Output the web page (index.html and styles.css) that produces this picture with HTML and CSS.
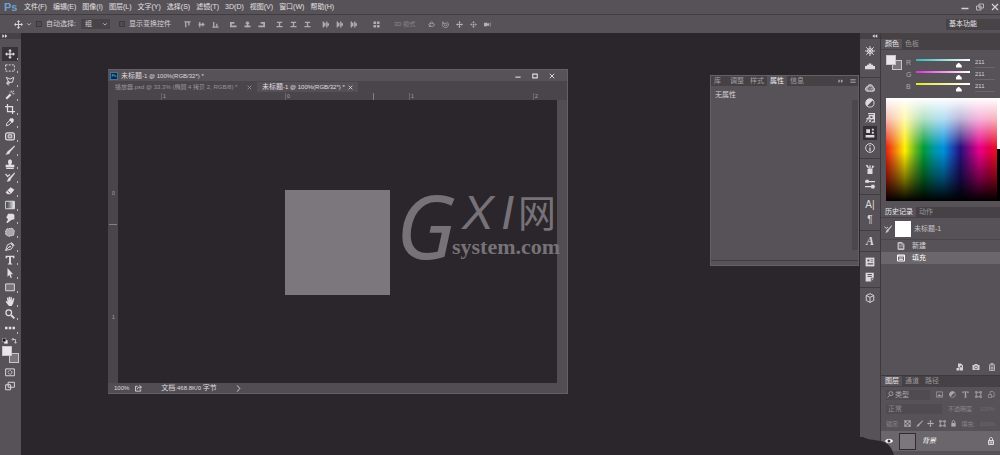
FILE: index.html
```html
<!DOCTYPE html>
<html lang="zh-CN">
<head>
<meta charset="utf-8">
<title>Ps</title>
<link rel="stylesheet" href="styles.css">
</head>
<body>
<svg class="sprite" aria-hidden="true">
  <symbol id="move" viewBox="0 0 16 16"><path d="M8 0l3 3.500H9V7h3.500V5L16 8l-3.500 3V9H9v3.500h2L8 16l-3-3.500h2V9H3.500v2L0 8l3.500-3v2H7V3.500H5z" fill="currentColor"/></symbol>
  <symbol id="marquee" viewBox="0 0 16 16"><path d="M1 3h14v10H1z" class="ln" stroke-dasharray="3 2"/></symbol>
  <symbol id="lasso" viewBox="0 0 16 16"><path d="M6 10L2 2l6 3 6-3-2 8-6 0-3 2 3 3" class="ln"/><circle cx="5" cy="11" r="2" class="ln"/></symbol>
  <symbol id="wand" viewBox="0 0 16 16"><path d="M2 14l7-7" class="ln" stroke-width="3.500"/><path d="M10 1v3M15 6h-3M14 1l-2 3M7 3l1 1" class="ln"/></symbol>
  <symbol id="crop" viewBox="0 0 16 16"><path d="M4 0v12h12M0 4h12v12" class="ln" stroke-width="2"/></symbol>
  <symbol id="dropper" viewBox="0 0 16 16"><path d="M2 14l1-4 5-5 3 3-5 5z" class="ln"/><path d="M8 3l5 5M10 6l3-3" class="ln" stroke-width="4"/></symbol>
  <symbol id="patch" viewBox="0 0 16 16"><rect x="1" y="3" width="14" height="11" rx="3" class="ln" stroke-width="2"/><path d="M5 6h6v5H5z" fill="#8b878b" stroke="currentColor"/></symbol>
  <symbol id="brush" viewBox="0 0 16 16"><path d="M15 1l1 1-8 9-2-2zM6 9l2 2c0 3-3 4-7 4 2-1 2-5 5-6z" fill="currentColor" stroke="currentColor" stroke-width="0.500"/></symbol>
  <symbol id="stamp" viewBox="0 0 16 16"><path d="M6 9c0-2-2-3-1-6 1-3 5-3 6 0 1 3-1 4-1 6h5v4H1V9zM2 14h12v2H2z" fill="currentColor"/></symbol>
  <symbol id="hist" viewBox="0 0 16 16"><path d="M15 1l1 1-7 9-2-2zM7 9l2 2c0 3-2 4-6 4 2-1 1-5 4-6z" fill="currentColor" stroke="currentColor" stroke-width="0.500"/><path d="M1 3l3 4 4-3" class="ln" stroke-width="2"/></symbol>
  <symbol id="eraser" viewBox="0 0 16 16"><path d="M9 2l6 4-6 7H4l-3-3z" fill="currentColor"/><path d="M4 8l5 4M3 15h11" class="ln" stroke="#777"/></symbol>
  <symbol id="grad" viewBox="0 0 16 16"><linearGradient id="gg"><stop stop-color="#333"/><stop offset="1" stop-color="#eee"/></linearGradient><path d="M1 2h14v12H1z" fill="url(#gg)" stroke="currentColor"/></symbol>
  <symbol id="smudge" viewBox="0 0 16 16"><path d="M5 1h8l2 2v7l-5 1-6 5-2-1 3-5-3-3z" fill="currentColor"/></symbol>
  <symbol id="sponge" viewBox="0 0 16 16"><path d="M3 3l9-1 3 4-1 7-8 2-5-3V6z" fill="#aaa6aa" stroke="currentColor" stroke-dasharray="2 1"/></symbol>
  <symbol id="pen" viewBox="0 0 16 16"><path d="M1 15l3-9 5-2 4 4-3 5zM1 15l6-6M9 3l5 5M10 2l5 5" class="ln"/><circle cx="8" cy="9" r="1.500" fill="currentColor"/></symbol>
  <symbol id="type" viewBox="0 0 16 16"><path d="M1 1h14v4h-2l-1-2H9.500v10l2 1v1h-7v-1l2-1V3H4L3 5H1z" fill="currentColor"/></symbol>
  <symbol id="arrow" viewBox="0 0 16 16"><path d="M4 0l9 10H9l2 5-2 1-2-5-3 3z" fill="currentColor"/></symbol>
  <symbol id="rect" viewBox="0 0 16 16"><path d="M1 3h14v11H1z" fill="#777377" stroke="currentColor"/></symbol>
  <symbol id="hand" viewBox="0 0 16 16"><path d="M4 9L3 3l2-1 1 5V1h2v6l1-6 2 1v6l2-5 2 1-2 8-3 5H7L1 9l1-1z" fill="currentColor"/></symbol>
  <symbol id="zoom" viewBox="0 0 16 16"><circle cx="6" cy="6" r="4.500" class="ln" stroke-width="2"/><path d="M10 10l5 5" class="ln" stroke-width="3"/></symbol>
  <symbol id="find" viewBox="0 0 16 16"><circle cx="9" cy="6" r="4.500" class="ln" stroke-width="2"/><path d="M6 10l-5 5" class="ln" stroke-width="2"/></symbol>
  <symbol id="more" viewBox="0 0 16 16"><path d="M0 6h4v4H0zM6 6h4v4H6zM12 6h4v4h-4z" fill="currentColor"/></symbol>
  <symbol id="reset" viewBox="0 0 16 16"><path d="M6 6h9v9H6z" fill="#eee"/><path d="M1 1h9v9H1z" fill="#111" stroke="#ccc"/></symbol>
  <symbol id="swap" viewBox="0 0 16 16"><path d="M5 1v6M2 4l3-3 3 3M5 4h7v10M9 11l3 3 3-3" class="ln" stroke-width="2"/></symbol>
  <symbol id="mask" viewBox="0 0 16 16"><path d="M1 3h14v11H1z" class="ln"/><circle cx="8" cy="8.500" r="3" class="ln" stroke-dasharray="2 1"/></symbol>
  <symbol id="screen" viewBox="0 0 16 16"><path d="M5 2h10v8H5zM1 6h8v8H1z" class="ln"/></symbol>
  <symbol id="at" viewBox="0 0 16 16"><path d="M1 2h14M4 3v11M11 3v7" class="ln" stroke-width="3"/></symbol>
  <symbol id="am" viewBox="0 0 16 16"><path d="M1 8h14M4 2v12M11 4v8" class="ln" stroke-width="3"/></symbol>
  <symbol id="ab" viewBox="0 0 16 16"><path d="M1 14h14M4 2v11M11 6v7" class="ln" stroke-width="3"/></symbol>
  <symbol id="al" viewBox="0 0 16 16"><path d="M2 2v12M3 4h7M3 12h12" class="ln" stroke-width="4"/></symbol>
  <symbol id="ac" viewBox="0 0 16 16"><path d="M8 1v14M4 5h8M1 12h14" class="ln" stroke-width="4"/></symbol>
  <symbol id="ar" viewBox="0 0 16 16"><path d="M14 2v12M6 4h7M1 12h12" class="ln" stroke-width="4"/></symbol>
  <symbol id="dv" viewBox="0 0 16 16"><path d="M2 3h12M1 13h14M8 3v10" class="ln" stroke-width="3"/></symbol>
  <symbol id="dh" viewBox="0 0 16 16"><path d="M3 1v14M11 1v14" class="ln" stroke-width="3"/><path d="M4 4h4v8H4zM12 5h4v6h-4z" fill="currentColor"/></symbol>
  <symbol id="auto" viewBox="0 0 16 16"><path d="M1 1h6v6H1zM9 1h6v6H9zM1 9h6v6H1zM9 9h6v6H9z" fill="currentColor"/></symbol>
  <symbol id="orbit" viewBox="0 0 16 16"><path d="M1 9c0-4 14-4 14 0s-10 5-12 2M5 7c0-7 6-7 7 0M3 14v-4h4" class="ln"/></symbol>
  <symbol id="roll" viewBox="0 0 16 16"><circle cx="8" cy="8" r="3" class="ln"/><path d="M3 3a7 7 0 1 0 8-1M2 1v4h4" class="ln"/></symbol>
  <symbol id="slide" viewBox="0 0 16 16"><path d="M8 0l3 4H5zM8 16l3-4H5zM0 8l4-3v6zM16 8l-4-3v6zM6 6h4v4H6z" fill="currentColor"/></symbol>
  <symbol id="cam" viewBox="0 0 16 16"><path d="M0 4h8v8H0zM8 7l4-3v8L8 9zM14 3h1v10h-1z" fill="currentColor"/></symbol>
  <symbol id="wheel" viewBox="0 0 16 16"><circle cx="8" cy="8" r="4" class="ln"/><path d="M8 0v16M0 8h16M2 2l12 12M14 2L2 14" class="ln"/></symbol>
  <symbol id="swatchfan" viewBox="0 0 16 16"><path d="M0 13V8h3V6h3V4h4v2h3v2h3v5z" fill="currentColor"/></symbol>
  <symbol id="cc" viewBox="0 0 16 16"><path d="M4 13C-1 13 0 6 4 6c1-5 9-4 9 1 4 1 3 6 0 6z" fill="#aaa6aa" stroke="currentColor"/><path d="M8 11a2 2 0 1 1 1-3M12 10a2 2 0 1 1 0-2" class="ln" stroke="#555"/></symbol>
  <symbol id="adj" viewBox="0 0 16 16"><circle cx="8" cy="8" r="6.500" class="ln"/><path d="M13 3A7 7 0 0 0 3 13z" fill="currentColor"/></symbol>
  <symbol id="fx" viewBox="0 0 16 16"><path d="M5 1h10v13h-4M7 4h6v5H8z" class="ln" stroke-width="2"/><path d="M1 15c3 0 2-9 6-9M2 9h5M6 10l4 5M10 10l-4 5" class="ln"/></symbol>
  <symbol id="props" viewBox="0 0 16 16"><path d="M1 11h14v4H1zM2 2h6v6H2zM11 1h3v3h-3zM11 6h3v3h-3z" fill="currentColor"/></symbol>
  <symbol id="info" viewBox="0 0 16 16"><circle cx="8" cy="8" r="7" class="ln"/><path d="M8 3v2M8 7v6" class="ln" stroke-width="2"/></symbol>
  <symbol id="brushes" viewBox="0 0 16 16"><path d="M4 8h8v8H4zM7 2h2v6H7zM1 2l3-1 3 6H5zM12 2l3 2-4 4-1-1z" fill="currentColor"/></symbol>
  <symbol id="presets" viewBox="0 0 16 16"><path d="M0 4h16M0 12h16" class="ln" stroke-width="2"/><path d="M1 1h5v5H1zM10 9h5v6h-5z" fill="currentColor"/></symbol>
  <symbol id="grid" viewBox="0 0 16 16"><path d="M1 1h14v14H1z" fill="currentColor"/><path d="M4 4h3v3H4zM9 4h4v1H9zM9 7h4v1H9zM4 10h9v2H4z" fill="#555055"/></symbol>
  <symbol id="note" viewBox="0 0 16 16"><path d="M1 1h13v9l-4 5H1z" fill="currentColor"/><path d="M4 4h7M4 7h7M10 15v-5h4" class="ln" stroke="#555055"/></symbol>
  <symbol id="cube" viewBox="0 0 16 16"><path d="M8 1l6 3v8l-6 3-6-3V4zM2 4l6 3 6-3M8 7v8" class="ln"/></symbol>
  <symbol id="doc" viewBox="0 0 16 16"><path d="M2 1h8l4 4v10H2z" fill="#a7a3a7" stroke="currentColor"/><path d="M4 5h5M4 8h8M4 11h8" class="ln" stroke="#555"/></symbol>
  <symbol id="state" viewBox="0 0 16 16"><path d="M1 2h14v12H1zM1 4h14" class="ln" stroke-width="2"/><path d="M4 8h8M4 11h8" class="ln"/></symbol>
  <symbol id="newdoc" viewBox="0 0 16 16"><path d="M4 1h6l4 4v10H8V9H4zM1 10h6v5H1z" fill="currentColor"/><path d="M8 7h4M10 5v4" class="ln" stroke="#555"/></symbol>
  <symbol id="photo" viewBox="0 0 16 16"><path d="M1 4h3l2-2h4l2 2h3v10H1z" fill="currentColor"/><circle cx="8" cy="9" r="3" fill="currentColor" stroke="#555"/></symbol>
  <symbol id="trash" viewBox="0 0 16 16"><path d="M2 4h12M6 4V1h4v3M3 5v10h10V5M6 7v6M8 7v6M10 7v6" class="ln"/></symbol>
  <symbol id="pic" viewBox="0 0 16 16"><path d="M1 2h14v12H1z" class="ln"/><path d="M3 12l4-5 3 3 2-1 2 3z" fill="currentColor"/></symbol>
  <symbol id="frame" viewBox="0 0 16 16"><path d="M3 3h10v10H3zM1 1h4v4H1zM11 1h4v4h-4zM1 11h4v4H1zM11 11h4v4h-4z" class="ln"/></symbol>
  <symbol id="smart" viewBox="0 0 16 16"><path d="M5 7V1h6l3 3v9H9M1 8h7v7H1z" class="ln"/></symbol>
  <symbol id="checker" viewBox="0 0 16 16"><path d="M1 1h14v14H1z" class="ln"/><path d="M2 2h4v4H2zM10 2h4v4h-4zM6 6h4v4H6zM2 10h4v4H2zM10 10h4v4h-4z" fill="currentColor"/></symbol>
  <symbol id="lock" viewBox="0 0 16 16"><path d="M3 7h10v8H3z" fill="currentColor"/><path d="M5 7V4c0-4 6-4 6 0v3" class="ln" stroke-width="2"/></symbol>
  <symbol id="lockout" viewBox="0 0 16 16"><path d="M3 7h10v8H3zM5 7V4c0-4 6-4 6 0v3M6 9v4M8 9v4M10 9v4" class="ln"/></symbol>
  <symbol id="eye" viewBox="0 0 16 16"><path d="M0 8c4-6 12-6 16 0-4 6-12 6-16 0z" fill="currentColor"/><circle cx="8" cy="8" r="3" fill="#333"/></symbol>
  <symbol id="share" viewBox="0 0 16 16"><path d="M6 3H1v11h12v-4M5 10c0-4 3-5 8-5M10 1l5 4-5 4" class="ln" stroke-width="2"/></symbol>
  <symbol id="min" viewBox="0 0 16 16"><path d="M1 11h14" class="ln" stroke-width="3"/></symbol>
  <symbol id="max" viewBox="0 0 16 16"><path d="M2 3h12v10H2z" class="ln" stroke-width="3"/></symbol>
  <symbol id="restore" viewBox="0 0 16 16"><path d="M6 2h9v8H6zM1 6h9v8H1z" class="ln"/></symbol>
  <symbol id="x" viewBox="0 0 16 16"><path d="M2 2l12 12M14 2L2 14" class="ln" stroke-width="2.500"/></symbol>
  <symbol id="right" viewBox="0 0 16 16"><path d="M1 3l6 5-6 5zM8 3l6 5-6 5z" fill="currentColor"/></symbol>
  <symbol id="left" viewBox="0 0 16 16"><path d="M7 3L1 8l6 5zM14 3L8 8l6 5z" fill="currentColor"/></symbol>
  <symbol id="menu" viewBox="0 0 16 16"><path d="M1 4h14M1 8h14M1 12h14" class="ln" stroke-width="2"/></symbol>
  <symbol id="down" viewBox="0 0 16 16"><path d="M3 6l5 5 5-5" class="ln" stroke-width="2"/></symbol>
  <symbol id="next" viewBox="0 0 16 16"><path d="M5 1l6 7-6 7" class="ln" stroke-width="2"/></symbol>
</svg>

<div class="app">
  <header class="menubar">
    <span class="logo">Ps</span>
    <nav class="menus">
      <button>文件(F)</button><button>编辑(E)</button><button>图像(I)</button><button>图层(L)</button><button>文字(Y)</button><button>选择(S)</button><button>滤镜(T)</button><button>3D(D)</button><button>视图(V)</button><button>窗口(W)</button><button>帮助(H)</button>
    </nav>
    <div class="winctl">
      <button aria-label="最小化"><svg><use href="#min"/></svg></button>
      <button aria-label="还原"><svg><use href="#restore"/></svg></button>
      <button aria-label="关闭"><svg><use href="#x"/></svg></button>
    </div>
  </header>

  <div class="options">
    <button class="current" aria-label="移动工具"><svg class="big"><use href="#move"/></svg><svg><use href="#down"/></svg></button>
    <label class="check auto"><input type="checkbox">自动选择:</label>
    <span class="pick"><select aria-label="自动选择"><option>组</option></select><svg><use href="#down"/></svg></span>
    <label class="check"><input type="checkbox">显示变换控件</label>
    <div class="aligns">
      <div class="set"><button aria-label="顶对齐"><svg><use href="#at"/></svg></button><button aria-label="垂直居中"><svg><use href="#am"/></svg></button><button aria-label="底对齐"><svg><use href="#ab"/></svg></button></div>
      <div class="set"><button aria-label="左对齐"><svg><use href="#al"/></svg></button><button aria-label="水平居中"><svg><use href="#ac"/></svg></button><button aria-label="右对齐"><svg><use href="#ar"/></svg></button></div>
      <div class="set"><button aria-label="按顶分布"><svg><use href="#dv"/></svg></button><button aria-label="垂直分布"><svg><use href="#dv"/></svg></button><button aria-label="按底分布"><svg><use href="#dv"/></svg></button></div>
      <div class="set"><button aria-label="按左分布"><svg><use href="#dh"/></svg></button><button aria-label="水平分布"><svg><use href="#dh"/></svg></button><button aria-label="按右分布"><svg><use href="#dh"/></svg></button></div>
      <button class="autoalign" aria-label="自动对齐"><svg><use href="#auto"/></svg></button>
    </div>
    <span class="mode3d">3D 模式:</span>
    <div class="set three"><button aria-label="旋转"><svg><use href="#orbit"/></svg></button><button aria-label="滚动"><svg><use href="#roll"/></svg></button><button aria-label="拖动"><svg><use href="#move"/></svg></button><button aria-label="滑动"><svg><use href="#slide"/></svg></button><button aria-label="缩放"><svg><use href="#cam"/></svg></button></div>
    <button class="workspace-pick">基本功能</button>
  </div>

  <div class="body">
    <aside class="toolbar">
      <div class="strip"><svg><use href="#right"/></svg></div>
      <div class="tools">
        <button class="on" aria-label="移动"><svg><use href="#move"/></svg></button>
        <button aria-label="选框"><svg><use href="#marquee"/></svg></button>
        <button aria-label="套索"><svg><use href="#lasso"/></svg></button>
        <button aria-label="魔棒"><svg><use href="#wand"/></svg></button>
        <button aria-label="裁剪"><svg><use href="#crop"/></svg></button>
        <button aria-label="吸管"><svg><use href="#dropper"/></svg></button>
        <button aria-label="修补"><svg><use href="#patch"/></svg></button>
        <button aria-label="画笔"><svg><use href="#brush"/></svg></button>
        <button aria-label="图章"><svg><use href="#stamp"/></svg></button>
        <button aria-label="历史画笔"><svg><use href="#hist"/></svg></button>
        <button aria-label="橡皮擦"><svg><use href="#eraser"/></svg></button>
        <button aria-label="渐变"><svg><use href="#grad"/></svg></button>
        <button aria-label="涂抹"><svg><use href="#smudge"/></svg></button>
        <button aria-label="海绵"><svg><use href="#sponge"/></svg></button>
        <button aria-label="钢笔"><svg><use href="#pen"/></svg></button>
        <button aria-label="文字"><svg><use href="#type"/></svg></button>
        <button aria-label="路径选择"><svg><use href="#arrow"/></svg></button>
        <button aria-label="矩形"><svg><use href="#rect"/></svg></button>
        <button aria-label="抓手"><svg><use href="#hand"/></svg></button>
        <button aria-label="缩放"><svg><use href="#zoom"/></svg></button>
        <button aria-label="更多"><svg><use href="#more"/></svg></button>
      </div>
      <div class="minis"><button aria-label="默认颜色"><svg><use href="#reset"/></svg></button><button aria-label="切换颜色"><svg><use href="#swap"/></svg></button></div>
      <div class="fgbg"><button class="bg" aria-label="背景色"></button><button class="fg" aria-label="前景色"></button></div>
      <div class="modes"><button aria-label="快速蒙版"><svg><use href="#mask"/></svg></button><button aria-label="屏幕模式"><svg><use href="#screen"/></svg></button></div>
    </aside>

    <main class="desk">
      <section class="doc">
        <div class="doc-title"><span class="badge">Ps</span><span class="name"><b>未标题</b>-1 @ 100%(RGB/32*) *</span>
          <div class="doc-ctl"><button aria-label="最小化"><svg><use href="#min"/></svg></button><button aria-label="最大化"><svg><use href="#max"/></svg></button><button aria-label="关闭"><svg><use href="#x"/></svg></button></div>
        </div>
        <div class="doc-tabs">
          <div class="dtab"><span class="name">播放器.psd @ 33.3% (椭圆 4 拷贝 2, RGB/8) *</span><button aria-label="关闭标签"><svg><use href="#x"/></svg></button></div>
          <div class="dtab active"><span class="name"><b>未标题</b>-1 @ 100%(RGB/32*) *</span><button aria-label="关闭标签"><svg><use href="#x"/></svg></button></div>
        </div>
        <div class="ruler-h"><i>1</i><i>0</i><i>1</i><i>2</i><b></b></div>
        <div class="ruler-v"><i>0</i><i>1</i><b></b></div>
        <div class="canvas"><div class="square"></div></div>
        <div class="vscroll"></div>
        <div class="status"><span>100%</span><svg><use href="#share"/></svg><span class="size"><b>文档</b>:468.8K/0 <b>字节</b></span><svg><use href="#next"/></svg></div>
        <div class="mark"><span class="g">G</span><span class="xi">X</span><span class="xi i">I</span><span class="net">网</span><span class="sys">system.com</span></div>
      </section>

      <section class="props">
        <div class="ptabs"><button>库</button><button>调整</button><button>样式</button><button class="active">属性</button><button>信息</button><span class="pend"><svg><use href="#right"/></svg><svg><use href="#menu"/></svg></span></div>
        <div class="pbody"><p>无属性</p><div class="pscroll"></div></div>
        <div class="pfoot"></div>
      </section>
    </main>

    <aside class="dock">
      <div class="strip end"><svg><use href="#left"/></svg></div>
      <div class="dgroup first"><button aria-label="颜色"><svg><use href="#wheel"/></svg></button><button aria-label="色板"><svg><use href="#swatchfan"/></svg></button></div>
      <div class="dgroup"><button aria-label="库"><svg><use href="#cc"/></svg></button><button aria-label="调整"><svg><use href="#adj"/></svg></button><button aria-label="样式"><svg><use href="#fx"/></svg></button><button class="on" aria-label="属性"><svg><use href="#props"/></svg></button><button aria-label="信息"><svg><use href="#info"/></svg></button></div>
      <div class="dgroup"><button aria-label="画笔"><svg><use href="#brushes"/></svg></button><button aria-label="画笔预设"><svg><use href="#presets"/></svg></button></div>
      <div class="dgroup"><button>A|</button><button>¶</button></div>
      <div class="dgroup"><button class="script">A</button></div>
      <div class="dgroup"><button aria-label="图层复合"><svg><use href="#grid"/></svg></button><button aria-label="注释"><svg><use href="#note"/></svg></button></div>
      <div class="dgroup last"><button aria-label="3D"><svg><use href="#cube"/></svg></button></div>
    </aside>

    <aside class="panels">
      <div class="strip"></div>
      <section class="color">
        <div class="tabs"><button class="active">颜色</button><button>色板</button></div>
        <div class="mixer">
          <div class="chips"><button class="bg" aria-label="背景色"></button><button class="fg" aria-label="前景色"></button></div>
          <div class="sliders">
            <label class="r"><span>R</span><input type="range" min="0" max="255" value="211"><output>211</output></label>
            <label class="gr"><span>G</span><input type="range" min="0" max="255" value="211"><output>211</output></label>
            <label class="b"><span>B</span><input type="range" min="0" max="255" value="211"><output>211</output></label>
          </div>
        </div>
        <div class="spectrum"><div class="hues"></div><div class="bw"></div></div>
      </section>
      <section class="history">
        <div class="tabs"><button class="active">历史记录</button><button>动作</button></div>
        <div class="snap"><svg><use href="#hist"/></svg><span class="thumb"></span><span>未标题-1</span></div>
        <div class="step"><svg><use href="#doc"/></svg><span>新建</span></div>
        <div class="step active"><svg><use href="#state"/></svg><span>填充</span></div>
        <div class="hfoot"><button aria-label="新建文档"><svg><use href="#newdoc"/></svg></button><button aria-label="快照"><svg><use href="#photo"/></svg></button><button aria-label="删除"><svg><use href="#trash"/></svg></button></div>
      </section>
      <section class="layers">
        <div class="tabs"><button class="active">图层</button><button>通道</button><button>路径</button></div>
        <div class="lrow filter"><span class="kind"><svg><use href="#find"/></svg><select aria-label="类型"><option>类型</option></select></span><svg><use href="#pic"/></svg><svg><use href="#adj"/></svg><svg><use href="#type"/></svg><svg><use href="#frame"/></svg><svg><use href="#smart"/></svg></div>
        <div class="lrow blend"><select aria-label="混合模式"><option>正常</option></select><span>不透明度:</span><span class="dimmer">100%</span></div>
        <div class="lrow locks"><span>锁定:</span><svg><use href="#checker"/></svg><svg><use href="#brush"/></svg><svg><use href="#move"/></svg><svg><use href="#frame"/></svg><svg><use href="#lock"/></svg><span>填充:</span><span class="dimmer">100%</span></div>
        <div class="layer"><svg><use href="#eye"/></svg><span class="lthumb"></span><span class="lname">背景</span><svg><use href="#lockout"/></svg></div>
        <div class="lfoot"></div>
      </section>
    </aside>
    <svg class="blob" viewBox="0 0 34 18" aria-hidden="true"><path d="M0 0h3c3 2 11 3 17 4 8 1 12 7 14 14H0z" fill="#2a262b"/></svg>
  </div>
</div>
</body>
</html>
```

FILE: styles.css
```css
* { box-sizing: border-box; }
body {
  margin: 0;
  background: #2a262b;
  color: #d4d1d4;
  font: 7px/10px "Liberation Sans", "Noto Sans CJK SC", sans-serif;
}
button, select, input { font: inherit; color: inherit; margin: 0; padding: 0; border: 0; background: none; border-radius: 0; }
button { display: flex; align-items: center; justify-content: center; white-space: nowrap; }
select { appearance: none; }
svg { width: 8px; height: 8px; flex: none; display: block; stroke-width: 1.5; }
.sprite { position: absolute; width: 0; height: 0; }
.ln { fill: none; stroke: currentColor; }
symbol .ln[stroke] { stroke: #555055; }
.app { display: flex; flex-direction: column; min-height: 100vh; }

.menubar { display: flex; align-items: center; height: 15px; background: #575257; border-bottom: 1px solid #403c40; }
.logo { width: 24px; padding-left: 4px; color: #6aa3cc; font: bold 11px/12px "Liberation Sans", sans-serif; }
.menus { display: flex; gap: 6px; color: #e2e0e2; }
.winctl { margin-left: auto; display: flex; gap: 7px; padding-right: 1px; }

.options { display: flex; align-items: center; height: 18px; background: #575257; padding-left: 10px; }
.current { gap: 3px; width: 26px; }
.current svg, .pick svg { width: 6px; height: 6px; }
.current .big { width: 9px; height: 9px; }
.check { display: flex; align-items: center; gap: 4px; }
.check input { appearance: none; width: 6px; height: 6px; border: 1px solid #3d393d; background: #514c51; }
.pick { display: flex; align-items: center; width: 29px; height: 10px; margin: 0 9px 0 5px; padding: 0 2px 0 4px; background: #474347; }
.pick select { flex: 1; height: 10px; }
.aligns { display: flex; align-items: center; gap: 11px; margin-left: 13px; color: #b0acb0; }
.autoalign { margin-left: 5px; }
.set { display: flex; gap: 7px; }
.aligns svg { width: 7px; height: 7px; }
.mode3d { width: 34px; margin-left: 14px; color: #8d888d; font-size: 6px; }
.three { color: #b5b1b5; }
.three svg { width: 7px; height: 7px; }
.workspace-pick { margin-left: auto; width: 54px; height: 11px; padding-left: 3px; justify-content: flex-start; background: #474347; color: #e8e6e8; }

.body { position: relative; flex: 1; display: flex; }
.strip { height: 6px; background: #454145; padding-left: 2px; }
.strip svg { width: 6px; height: 6px; }
.strip.end { display: flex; justify-content: flex-end; padding-right: 2px; }
.toolbar { width: 21px; background: #575257; display: flex; flex-direction: column; color: #e0dee0; }
.tools { margin: 8px 3px 0 2px; height: 288px; display: grid; grid-auto-rows: 1fr; }
.tools button { position: relative; padding-right: 1px; }
.tools button::after { content: ""; position: absolute; right: 0; bottom: 1px; width: 1px; height: 2px; background: #bbb; }
.tools .on { background: #373338; }
.tools svg, .modes svg { width: 10px; height: 10px; }
.minis { display: flex; gap: 3px; margin: 3px 0 0 2px; }
.minis svg { width: 6px; height: 6px; }
.fgbg { position: relative; width: 17px; height: 17px; margin: 2px 0 4px 2px; }
.fg, .bg { position: absolute; border: 1px solid #c9c6c9; }
.fg { left: 0; top: 0; width: 10px; height: 10px; background: #ebe6eb; }
.bg { right: 0; bottom: 0; width: 10px; height: 10px; background: #7b767b; }
.modes { display: flex; flex-direction: column; gap: 4px; padding-left: 5px; align-items: flex-start; }

.desk { position: relative; flex: 1; overflow: hidden; }
.doc {
  position: absolute; left: 87px; top: 36px; width: 460px;
  display: grid; grid-template: 12px 12px 7px 283px 10px / 10px 1fr 10px;
  border: 1px solid #656065; border-width: 0 1px 1px 0; background: #4a454a;
}
.doc-title, .doc-tabs, .status { grid-column: 1 / -1; display: flex; align-items: center; }
.doc-title { background: #575257; padding-left: 2px; gap: 3px; color: #dddadd; border-top: 1px solid #656065; }
.name, .size { font-size: 6px; white-space: nowrap; }
.name b, .size b { font-weight: normal; font-size: 7px; }
.badge { flex: none; width: 8px; height: 8px; background: #0b2946; border: 1px solid #3779a8; color: #8ccaf0; font-size: 4px; line-height: 6px; text-align: center; }
.doc-ctl { display: flex; gap: 11px; margin-left: auto; padding-right: 12px; }
.doc-ctl svg { width: 6px; height: 6px; }
.dtab { display: flex; align-items: center; justify-content: space-between; height: 10px; width: 149px; padding: 0 5px 0 7px; color: #989498; }
.dtab.active { width: 101px; background: #555055; color: #e0dde0; padding-left: 5px; }
.dtab svg { width: 5px; height: 5px; }
.ruler-h { grid-column: 2 / 4; position: relative; display: grid; grid-template-columns: repeat(3, 124px) 1fr; padding-left: 43px; background: #4a454a; }
.ruler-h i, .ruler-v i { font-style: normal; font-size: 5px; line-height: 6px; color: #aaa6aa; }
.ruler-h i { border-left: 1px solid #6c676c; padding-left: 1px; }
.ruler-h b { position: absolute; left: 255px; top: 0; width: 1px; height: 7px; background: #858085; }
.ruler-v { position: relative; grid-column: 1; grid-row: 4; display: grid; grid-template-rows: 124px 1fr; padding: 90px 0 0 4px; }
.ruler-v b { position: absolute; left: 1px; top: 124px; width: 8px; height: 1px; background: #858085; }
.canvas { grid-column: 2; grid-row: 4; background: #2a262b; padding: 90px 0 0 167px; }
.square { width: 105px; height: 105px; background: #7c777c; }
.vscroll { grid-column: 3; grid-row: 4; background: #524d52; }
.status { background: #524d52; color: #dedbde; padding-left: 6px; gap: 6px; }
.status svg { width: 7px; height: 7px; }
.status > span:first-child { font-size: 6px; }
.status .size { margin: 0 12px 0 13px; }
.mark { position: absolute; left: 295px; top: 118px; width: 160px; height: 80px; color: #777277; white-space: nowrap; }
.mark span { position: absolute; }
.g { left: -7px; top: -2px; font: italic 88px/80px "Noto Sans", sans-serif; }
.xi { left: 59px; top: 8px; font: italic 48px/36px "Liberation Sans", sans-serif; }
.xi.i { left: 98px; }
.net { left: 115px; top: 6px; font: 38px/36px "Noto Sans CJK SC", sans-serif; }
.sys { left: 49px; top: 48px; font: bold 22px/24px "Liberation Serif", serif; }

.props { position: absolute; right: 1px; top: 42px; width: 149px; border: 1px solid #656065; background: #575257; }
.ptabs { display: flex; height: 10px; background: #454145; color: #a39fa3; }
.ptabs button { padding: 0 3px; }
.ptabs button:first-child { padding-right: 6px; }
.ptabs button, .tabs button { height: 10px; }
.ptabs button + button { width: 20px; }
.ptabs .active { background: #575257; color: #eee; }
.pend { margin-left: auto; display: flex; align-items: center; gap: 6px; padding-right: 2px; }
.pend svg { width: 6px; height: 6px; }
.pbody { height: 174px; display: flex; justify-content: space-between; }
.pbody p { margin: 4px; }
.pscroll { width: 6px; margin: 14px 0 10px; background: #4b474b; }
.pfoot { height: 5px; border-top: 1px solid #403c40; }

.dock { width: 21px; background: #575257; display: flex; flex-direction: column; border-right: 1px solid #3c383c; color: #dddadd; }
.dgroup { padding: 3px 0 2px; border-bottom: 1px solid #403c40; display: flex; flex-direction: column; align-items: center; }
.dgroup.first { padding: 5px 0 3px; }
.dgroup.last { border: 0; }
.dgroup button { width: 14px; height: 14px; margin-bottom: 1px; font-size: 10px; }
.dgroup .on { background: #333034; }
.dgroup svg { width: 10px; height: 10px; }
.dgroup .script { font: italic bold 12px/14px "Liberation Serif", serif; }

.panels { width: 119px; background: #575257; display: flex; flex-direction: column; }
.tabs { display: flex; height: 11px; background: #454145; color: #9a969a; }
.tabs button { padding: 0 3px; }
.tabs .active { background: #575257; color: #eceaec; padding: 0 3px 0 4px; }
.mixer { display: flex; gap: 4px; height: 48px; padding: 5px 5px 0; }
.chips { position: relative; flex: none; width: 16px; height: 15px; }
.sliders { flex: 1; display: flex; flex-direction: column; padding-top: 2px; }
.sliders label { display: flex; align-items: center; height: 12px; gap: 5px; font-size: 7px; }
.sliders span { width: 5px; color: #aaa; }
.sliders output { width: 20px; font-size: 6px; border-bottom: 1px solid #6c676c; line-height: 9px; }
.sliders input { appearance: none; flex: 1; min-width: 0; width: 54px; height: 10px; background: linear-gradient(90deg, #2fb8b8, #fff) 0 1px / 100% 2px no-repeat; }
.sliders .gr input { background-image: linear-gradient(90deg, #e02cd8, #fff); }
.sliders .b input { background-image: linear-gradient(90deg, #e6e22c, #fff); }
.sliders input::-webkit-slider-thumb { appearance: none; width: 6px; height: 5px; margin-top: 4px; background: #fff; clip-path: polygon(50% 0, 100% 60%, 100% 100%, 0 100%, 0 60%); }
.spectrum { display: flex; height: 103px; margin-left: 5px; }
.hues { flex: 1; background:
  linear-gradient(#fff, rgba(255,255,255,.7) 20%, rgba(255,255,255,0) 48%, rgba(0,0,0,0) 52%, rgba(0,0,0,.5) 78%, #000),
  linear-gradient(90deg, #e8200c, #f47a10 8%, #fff000 17%, #6db820 26%, #009a38 34%, #0098a0 43%, #0090dd 52%, #1848b0 60%, #24107c 67%, #8c0880 76%, #e8008c 84%, #e4004c 93%, #e8101c); }
.bw { width: 3px; background: linear-gradient(#fff 50%, #000 50%); }
.history { flex: 1; padding-top: 6px; display: flex; flex-direction: column; }
.snap { display: flex; align-items: center; height: 22px; gap: 3px; padding-left: 3px; color: #c5c2c5; border-bottom: 1px solid #4a464a; }
.thumb { width: 16px; height: 16px; background: #fff; }
.step { display: flex; align-items: center; height: 12px; gap: 7px; padding-left: 16px; color: #d5d2d5; }
.step.active { background: #6b666b; color: #fff; }
.hfoot { display: flex; justify-content: flex-end; gap: 8px; margin-top: auto; padding: 2px 4px 4px; }
.layers { border-top: 1px solid #3c383c; }
.lrow { display: flex; align-items: center; height: 15px; padding: 0 5px; justify-content: space-between; color: #aaa6aa; white-space: nowrap; }
.lrow svg { width: 7px; height: 7px; }
.kind { display: flex; gap: 1px; width: 44px; height: 10px; align-items: center; padding-left: 1px; background: #504b50; }
.blend { color: #8c888c; height: 14px; gap: 3px; }
.blend select { width: 56px; height: 10px; background: #504b50; padding-left: 2px; }
.blend span, .locks span { font-size: 6px; }
.locks { color: #b0acb0; }
.locks span { color: #8a868a; }
.lrow .dimmer { color: #6f6b6f; }
.layer { display: flex; align-items: center; height: 20px; padding: 0 5px 0 4px; background: #6b666b; color: #fff; }
.lthumb { width: 17px; height: 17px; margin: 0 6px; background: #7c777c; border: 1px solid #302c30; }
.lname { flex: 1; font-style: italic; }
.lfoot { height: 4px; }
.blob { position: absolute; right: 106px; bottom: 0; width: 34px; height: 18px; }
```
